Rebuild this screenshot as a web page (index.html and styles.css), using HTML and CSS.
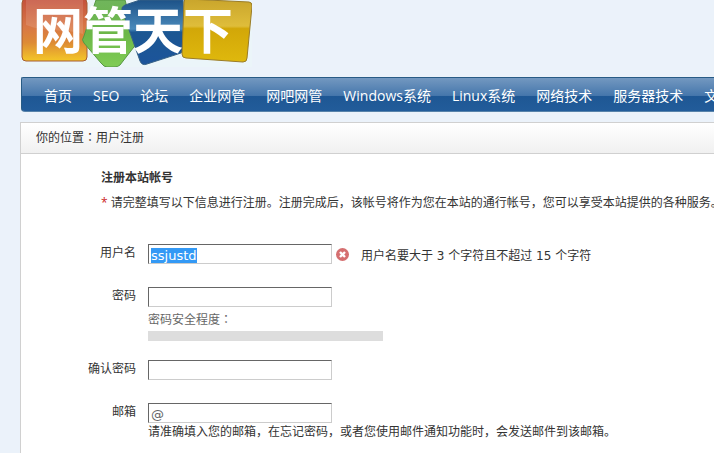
FILE: index.html
```html
<!DOCTYPE html>
<html lang="zh-CN">
<head>
<meta charset="utf-8">
<meta name="viewport" content="width=device-width, initial-scale=1">
<title>用户注册</title>
<link rel="stylesheet" href="styles.css">
</head>
<body>
<header>
  <a class="logo" href="#">
    <svg viewBox="0 0 231 67" width="231" height="67" role="img" aria-label="网管天下">
      <defs>
        <linearGradient id="red" x2="0" y2="1"><stop offset="0" stop-color="#c4513c"/><stop offset=".45" stop-color="#d87745"/><stop offset=".7" stop-color="#dd8a35"/><stop offset="1" stop-color="#f4c728"/></linearGradient>
        <linearGradient id="green" x2="0" y2="1"><stop offset="0" stop-color="#70b55c"/><stop offset=".5" stop-color="#6cb748"/><stop offset="1" stop-color="#80cc55"/></linearGradient>
        <linearGradient id="blue" x2="0" y2="1"><stop offset="0" stop-color="#1d5288"/><stop offset=".45" stop-color="#4a8abb"/><stop offset=".5" stop-color="#1c5792"/><stop offset="1" stop-color="#1c549b"/></linearGradient>
        <linearGradient id="gold" x2="0" y2="1"><stop offset="0" stop-color="#c9a52c"/><stop offset=".43" stop-color="#dfbd3a"/><stop offset=".47" stop-color="#d2a708"/><stop offset="1" stop-color="#dfb80d"/></linearGradient>
      </defs>
      <rect width="231" height="67" fill="#ebf5f9"/>
      <rect x="1" y="-1" width="65" height="62" rx="4" fill="url(#red)" stroke="#a65c34"/>
      <path d="M5 0H62V34C44 28 25 33 5 25Z" fill="#fff" opacity=".13"/>
      <path d="M75 0H104L116 43L99 65Q97 67 93 67H86Q83 67 80 63L63 43Q60 40 63 36Z" fill="url(#green)" stroke="#579744"/>
      <path d="M104 5L119 0H162L164 44Q165 50 160 53L126 64Q121 66 119 61L101 10Q100 7 104 5Z" fill="url(#blue)" stroke="#376185"/>
      <path d="M166 -1L228 2Q231 2 231 6L226 58Q226 62 222 62L165 58Q161 58 161 54L163 2Q163 -1 166 -1Z" fill="url(#gold)" stroke="#9a7c28"/>
      <text class="logo-text" x="12" y="49">网管天下</text>
    </svg>
  </a>
  <nav class="nav">
    <a href="#">首页</a>
    <a href="#">SEO</a>
    <a href="#">论坛</a>
    <a href="#">企业网管</a>
    <a href="#">网吧网管</a>
    <a href="#">Windows系统</a>
    <a href="#">Linux系统</a>
    <a href="#">网络技术</a>
    <a href="#">服务器技术</a>
    <a href="#">文章</a>
  </nav>
</header>
<main class="panel">
  <div class="crumb">你的位置<span class="colon">：</span>用户注册</div>
  <form class="form">
    <h1>注册本站帐号</h1>
    <p class="intro"><span class="star">*</span> 请完整填写以下信息进行注册。注册完成后，该帐号将作为您在本站的通行帐号，您可以享受本站提供的各种服务。</p>
    <div class="row">
      <label for="user">用户名</label>
      <div class="field inline">
        <input id="user" type="text" value="ssjustd">
        <svg class="error-icon" viewBox="0 0 13 13" width="13" height="13" aria-hidden="true"><circle cx="6.5" cy="6.5" r="6.5" fill="#d56f70"/><path d="M4 4L9 9M9 4L4 9" stroke="#fff" stroke-width="2.4"/></svg>
        <span class="error">用户名要大于 3 个字符且不超过 15 个字符</span>
      </div>
    </div>
    <div class="row">
      <label for="pass">密码</label>
      <div class="field">
        <input id="pass" type="password">
        <div class="strength">密码安全程度<span class="colon">：</span></div>
        <div class="meter"></div>
      </div>
    </div>
    <div class="row">
      <label for="confirm">确认密码</label>
      <div class="field"><input id="confirm" type="password"></div>
    </div>
    <div class="row">
      <label for="mail">邮箱</label>
      <div class="field">
        <input id="mail" type="text" value="@">
        <div class="hint">请准确填入您的邮箱，在忘记密码，或者您使用邮件通知功能时，会发送邮件到该邮箱。</div>
      </div>
    </div>
  </form>
</main>
<script src="script.js"></script>
</body>
</html>
```
FILE: styles.css
```css
* { box-sizing: border-box; }

body {
  margin: 0;
  background: #ebf2fa;
  color: #333;
  font: 12px/18px "Open Sans", "Noto Sans CJK SC", sans-serif;
  overflow: hidden;
}

header { padding-left: 21px; }

.logo { display: block; }
.logo svg { display: block; }

.logo-text {
  fill: #fff;
  font: bold 50px "Noto Sans CJK SC", sans-serif;
}

.nav {
  display: flex;
  gap: 21px;
  height: 35px;
  margin-top: 10px;
  padding-left: 22px;
  overflow: hidden;
  border: 1px solid #285b85;
  border-right: 0;
  border-bottom-color: #5883aa;
  border-radius: 2px 0 0 4px;
  background: linear-gradient(#7398c0, #4677ac 53%, #1e5794 54%, #225c9a);
}

.nav a {
  flex: none;
  color: #fff;
  font-size: 14px;
  line-height: 36px;
  text-decoration: none;
}

.panel {
  min-height: 340px;
  margin: 10px 0 0 20px;
  border: 1px solid #d0d0d0;
  border-right: 0;
  background: #fff;
}

.crumb {
  padding: 6px 15px;
  border-bottom: 1px solid #d0d0d0;
  background: linear-gradient(#fff, #f0f0f0);
}

.colon {
  font-family: "Noto Sans CJK JP", sans-serif;
  font-feature-settings: "locl" 0;
  line-height: 1;
}

.form { padding: 15px 0 0 55px; }

h1 {
  margin: 0 0 7px 25px;
  font-size: 12px;
  line-height: 18px;
}

.intro {
  margin: 0 0 32px 25px;
  white-space: nowrap;
}

.star { color: #c22; }

.row {
  display: flex;
  gap: 12px;
  margin-bottom: 23px;
}

.row label {
  flex: none;
  width: 60px;
  text-align: right;
}

.field { white-space: nowrap; }

.inline {
  display: flex;
  align-items: center;
}

input {
  display: block;
  width: 184px;
  height: 20px;
  padding: 2px 2px 0;
  border: 1px solid;
  border-color: #666 #ccc #ccc #666;
  outline: 0;
  background: #fff;
  color: #666;
  font: 13px "DejaVu Sans", sans-serif;
}

input::selection {
  background: #3399f5;
  color: #fff;
}

.error-icon { margin: 0 12px 0 4px; }

.error {
  padding-top: 4px;
  font-family: "DejaVu Sans", "Noto Sans CJK SC", sans-serif;
  line-height: 16px;
}

.strength {
  margin: 4px 0 2px;
  color: #666;
}

.meter {
  width: 235px;
  height: 10px;
  margin-bottom: -4px;
  background: #ddd;
}
```
FILE: script.js
```javascript
const user = document.getElementById("user");
user.focus();
user.select();
```
